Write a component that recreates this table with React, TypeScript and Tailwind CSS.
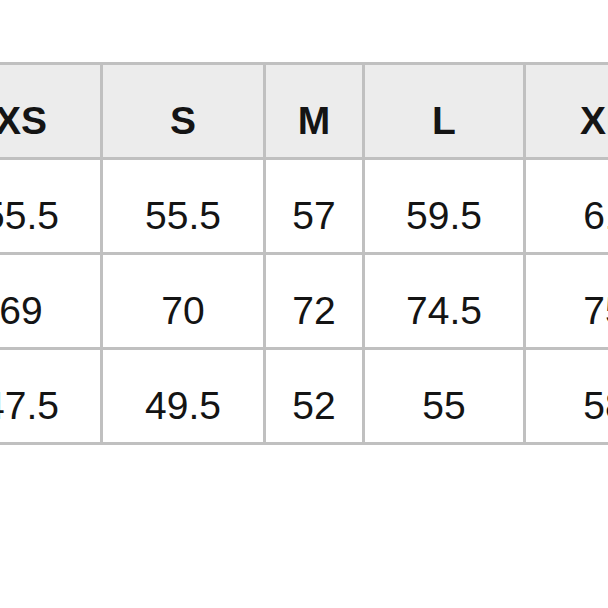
import React from 'react';

const sizes = ['XS', 'S', 'M', 'L', 'XL'];

const rows = [
  ['55.5', '55.5', '57', '59.5', '61'],
  ['69', '70', '72', '74.5', '75'],
  ['47.5', '49.5', '52', '55', '58'],
];

export default function App() {
  return (
    <div className="w-[608px] h-[608px] overflow-hidden bg-white" style={{ fontFamily: '"Liberation Sans", Arial, sans-serif' }}>
      <div className="mt-[62px] ml-[-61px] w-max grid grid-cols-[158px_160px_96px_158px_158px] gap-[3px] border-[3px] border-[#c0c0c0] bg-[#c0c0c0]">
        {sizes.map((s) => (
          <div key={s} className="h-[92px] pt-[20px] flex items-center justify-center bg-[#ececec] text-[39px] font-bold text-[#141414]">
            {s}
          </div>
        ))}
        {rows.map((row, i) =>
          row.map((v, j) => (
            <div key={`${i}-${j}`} className="h-[92px] pt-[20px] flex items-center justify-center bg-white text-[39px] text-[#141414]">
              {v}
            </div>
          ))
        )}
      </div>
    </div>
  );
}
